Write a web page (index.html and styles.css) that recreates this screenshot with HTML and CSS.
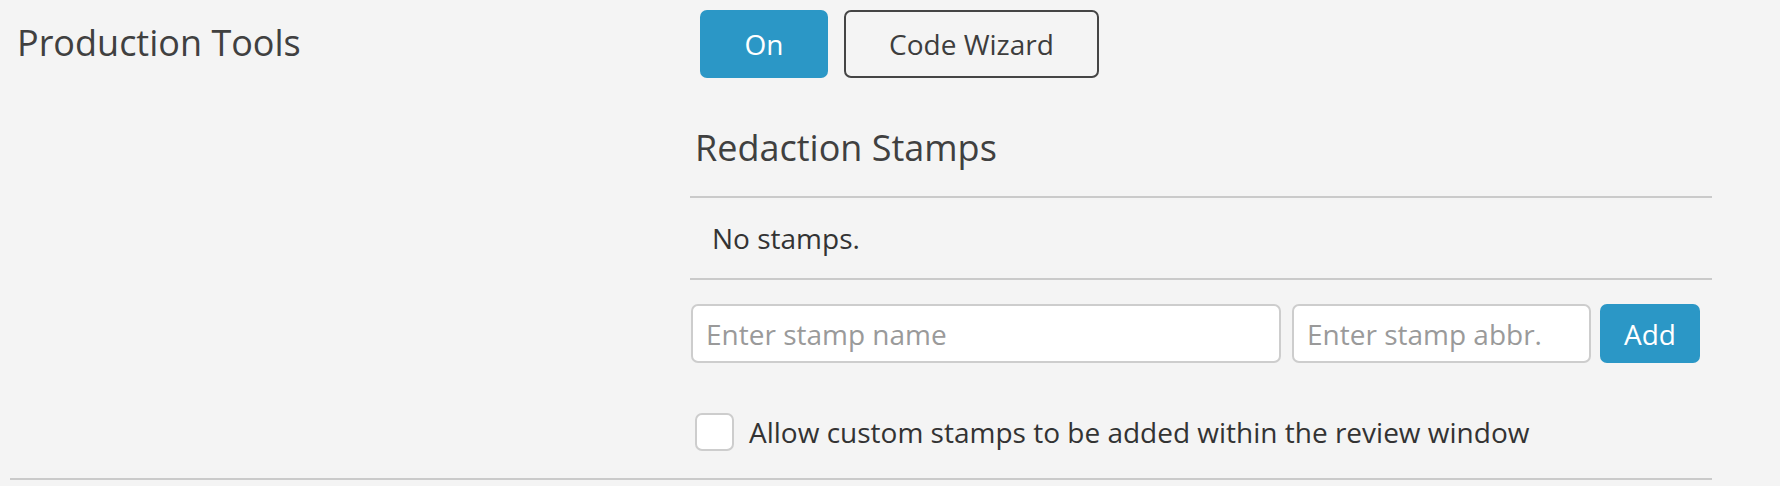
FILE: index.html
```html
<!DOCTYPE html>
<html>
<head lang="en">
    <meta charset="UTF-8">
    <title>Production Tools</title>
    <link rel="stylesheet" href="styles.css">
</head>
<body>
<div class="settings">
    <div class="setting-row">
        <div class="setting-label">Production Tools</div>
        <div class="setting-body">
            <div class="toggle-group">
                <button class="btn btn-primary btn-on">On</button>
                <button class="btn btn-outline btn-wizard">Code Wizard</button>
            </div>
            <h3 class="section-title">Redaction Stamps</h3>
            <ul class="stamp-list">
                <li class="stamp-empty">No stamps.</li>
            </ul>
            <div class="stamp-form">
                <input class="field field-name" type="text" placeholder="Enter stamp name">
                <input class="field field-abbr" type="text" placeholder="Enter stamp abbr.">
                <button class="btn btn-primary btn-add">Add</button>
            </div>
            <label class="check-row">
                <span class="check-box"></span>
                <span class="check-text">Allow custom stamps to be added within the review window</span>
            </label>
        </div>
    </div>
</div>
</body>
</html>
```

FILE: styles.css
```css
*{
    margin:0;
    padding:0;
    box-sizing:border-box;
    list-style:none;
}
body{
    background:#f4f4f4;
    color:#3d3d3d;
    font-family:"Open Sans", "Liberation Sans", sans-serif;
}
.settings{
    padding:0 10px;
}
.setting-row{
    width:1702px;
    display:flex;
    border-bottom:2px solid #cacaca;
    padding-bottom:27px;
}
.setting-label{
    width:680px;
    padding:16px 0 0 7px;
    font-size:36px;
    line-height:54px;
    color:#404040;
}
.setting-body{
    width:1022px;
    padding-top:10px;
}
.toggle-group{
    display:flex;
    gap:16px;
    margin-left:10px;
}
.btn{
    font-family:inherit;
    border-radius:7px;
    cursor:pointer;
}
.btn-primary{
    background:#2b97c6;
    color:#fff;
    border:none;
}
.btn-outline{
    background:transparent;
    color:#3d3d3d;
    border:2px solid #454545;
}
.btn-on{
    width:128px;
    height:68px;
    font-size:28px;
}
.btn-wizard{
    width:255px;
    height:68px;
    font-size:28px;
}
.section-title{
    font-weight:normal;
    font-size:36px;
    line-height:44px;
    padding:48px 0 0 5px;
    height:118px;
    color:#404040;
}
.stamp-list{
    border-top:2px solid #cacaca;
    border-bottom:2px solid #cacaca;
}
.stamp-empty{
    height:80px;
    padding-left:22px;
    font-size:28px;
    line-height:80px;
    color:#333;
}
.stamp-form{
    display:flex;
    margin:24px 0 0 1px;
    height:59px;
}
.field{
    height:59px;
    background:#fff;
    border:2px solid #cdcdcd;
    border-radius:7px;
    padding:0 13px;
    font-family:inherit;
    font-size:28px;
    color:#333;
}
.field::placeholder{
    color:#9a9a9a;
}
.field-name{
    width:590px;
}
.field-abbr{
    width:299px;
    margin-left:11px;
}
.btn-add{
    width:100px;
    height:59px;
    margin-left:9px;
    font-size:28px;
}
.check-row{
    display:flex;
    align-items:center;
    margin:50px 0 0 5px;
    cursor:pointer;
}
.check-box{
    width:39px;
    height:38px;
    background:#fff;
    border:2px solid #cdcdcd;
    border-radius:7px;
}
.check-text{
    margin-left:15px;
    font-size:28px;
    color:#333;
}
```
